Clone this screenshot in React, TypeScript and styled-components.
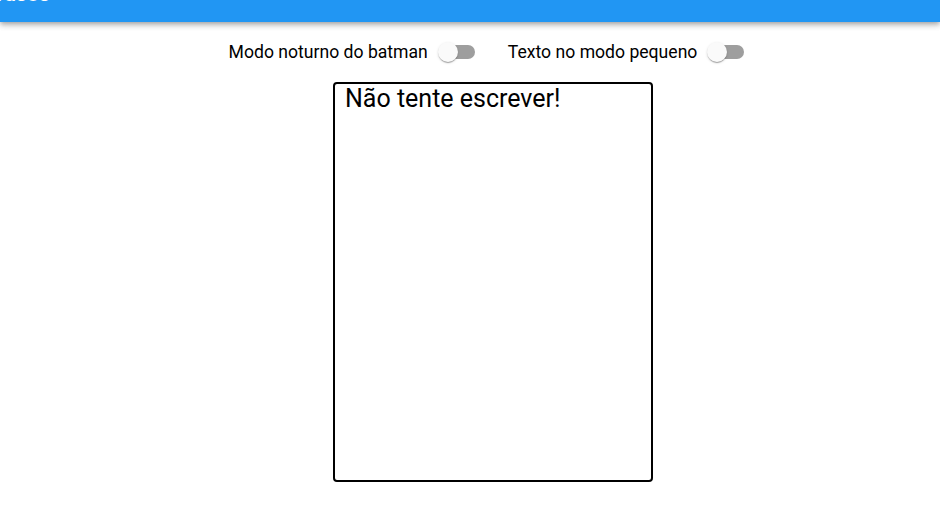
import React, { useState } from 'react'
import styled, { createGlobalStyle } from 'styled-components'

const Global = createGlobalStyle`
  html, body {
    margin: 0;
    padding: 0;
    background: #fff;
    font-family: Roboto, "Liberation Sans", sans-serif;
  }
`

const AppBar = styled.header`
  height: 22px;
  background: #2196f3;
  overflow: hidden;
  box-shadow: 0 2px 4px -1px rgba(0,0,0,0.2), 0 4px 5px 0 rgba(0,0,0,0.14), 0 1px 10px 0 rgba(0,0,0,0.12);
  position: relative;
  z-index: 1;
`

const Title = styled.h1`
  margin: -18px 0 0 -7px;
  font-size: 21px;
  font-weight: 500;
  line-height: 24px;
  color: #fff;
  letter-spacing: 0.15px;
`

const Controls = styled.div`
  display: flex;
  justify-content: center;
  align-items: center;
  gap: 33px;
  padding: 19px 0 0 33px;
  height: 22px;
`

const Label = styled.label`
  display: flex;
  align-items: center;
  gap: 10px;
  font-size: 17.6px;
  color: #000;
  cursor: pointer;
`

const Track = styled.span<{ on: boolean }>`
  position: relative;
  width: 34px;
  height: 14px;
  border-radius: 7px;
  background: ${(p) => (p.on ? '#90caf9' : '#9e9e9e')};
  margin-left: 3px;
`

const Thumb = styled.span<{ on: boolean }>`
  position: absolute;
  top: -3px;
  left: ${(p) => (p.on ? '17px' : '-3px')};
  width: 20px;
  height: 20px;
  border-radius: 50%;
  background: ${(p) => (p.on ? '#2196f3' : '#fafafa')};
  box-shadow: 0 2px 1px -1px rgba(0,0,0,0.2), 0 1px 1px 0 rgba(0,0,0,0.14), 0 1px 3px 0 rgba(0,0,0,0.12);
  transition: left 0.15s;
`

const Stage = styled.main`
  display: flex;
  justify-content: center;
  padding: 19px 0 0 46px;
`

const Paper = styled.div<{ small: boolean; dark: boolean }>`
  box-sizing: border-box;
  width: 320px;
  height: 400px;
  border: 2px solid ${(p) => (p.dark ? '#fff' : '#000')};
  border-radius: 4px;
  background: ${(p) => (p.dark ? '#000' : '#fff')};
  color: ${(p) => (p.dark ? '#fff' : '#000')};
  padding: 0 10px;
  font-size: ${(p) => (p.small ? '16px' : '25px')};
  line-height: 30px;
`

const Toggle = ({ text, on, onChange }: { text: string; on: boolean; onChange: () => void }) => (
  <Label onClick={onChange}>
    {text}
    <Track on={on}>
      <Thumb on={on} />
    </Track>
  </Label>
)

export default function App() {
  const [dark, setDark] = useState(false)
  const [small, setSmall] = useState(false)
  return (
    <>
      <Global />
      <AppBar>
        <Title>Tasos</Title>
      </AppBar>
      <Controls>
        <Toggle text="Modo noturno do batman" on={dark} onChange={() => setDark(!dark)} />
        <Toggle text="Texto no modo pequeno" on={small} onChange={() => setSmall(!small)} />
      </Controls>
      <Stage>
        <Paper small={small} dark={dark}>Não tente escrever!</Paper>
      </Stage>
    </>
  )
}
